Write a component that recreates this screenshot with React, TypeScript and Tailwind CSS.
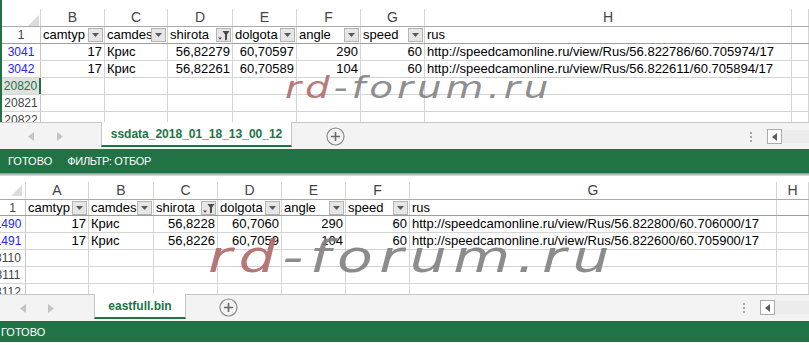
import React from "react";

type Col = { l: string; w: string };
type Row = { n: string; kind: "blue" | "sel" | "plain"; cells: string[] };

const HEADS = ["camtyp", "camdes", "shirota", "dolgota", "angle", "speed", "rus", ""];
const BTN: string[] = ["n", "n", "a", "n", "n", "n", "", ""];
const RIGHT = [true, false, true, true, true, true, false, false];

const TOP_COLS: Col[] = [
  { l: "B", w: "w-[64px]" },
  { l: "C", w: "w-[63px]" },
  { l: "D", w: "w-[65px]" },
  { l: "E", w: "w-[64px]" },
  { l: "F", w: "w-[64px]" },
  { l: "G", w: "w-[64px]" },
  { l: "H", w: "w-[367px]" },
  { l: "", w: "flex-1" },
];

const BOT_COLS: Col[] = [
  { l: "A", w: "w-[63px]" },
  { l: "B", w: "w-[65px]" },
  { l: "C", w: "w-[64px]" },
  { l: "D", w: "w-[64px]" },
  { l: "E", w: "w-[64px]" },
  { l: "F", w: "w-[64px]" },
  { l: "G", w: "w-[367px]" },
  { l: "H", w: "flex-1" },
];

const E = ["", "", "", "", "", "", "", ""];

const TOP_ROWS: Row[] = [
  { n: "3041", kind: "blue", cells: ["17", "Крис", "56,82279", "60,70597", "290", "60", "http://speedcamonline.ru/view/Rus/56.822786/60.705974/17", ""] },
  { n: "3042", kind: "blue", cells: ["17", "Крис", "56,82261", "60,70589", "104", "60", "http://speedcamonline.ru/view/Rus/56.822611/60.705894/17", ""] },
  { n: "20820", kind: "sel", cells: E },
  { n: "20821", kind: "plain", cells: E },
];

const BOT_ROWS: Row[] = [
  { n: "1490", kind: "blue", cells: ["17", "Крис", "56,8228", "60,7060", "290", "60", "http://speedcamonline.ru/view/Rus/56.822800/60.706000/17", ""] },
  { n: "1491", kind: "blue", cells: ["17", "Крис", "56,8226", "60,7059", "104", "60", "http://speedcamonline.ru/view/Rus/56.822600/60.705900/17", ""] },
  { n: "3110", kind: "plain", cells: E },
  { n: "3111", kind: "plain", cells: E },
];

function FilterBtn({ active }: { active: boolean }) {
  return (
    <div className="w-[15px] h-[14px] mr-[1px] mt-[1px] shrink-0 border border-[#b4b4b4] bg-[#e6e6e6] flex items-center justify-center">
      {active ? (
        <svg width="13" height="11" viewBox="0 0 13 11">
          <path d="M1 7.5 H5 L3 9.8 Z" fill="#4a4a4a" />
          <path d="M5.5 1 H12.5 L10 4.5 V9.5 L8 10.5 V4.5 Z" fill="#4a4a4a" />
        </svg>
      ) : (
        <svg width="7" height="4" viewBox="0 0 7 4">
          <path d="M0 0 H7 L3.5 4 Z" fill="#5a5a5a" />
        </svg>
      )}
    </div>
  );
}

function Corner() {
  return (
    <svg width="11" height="11" viewBox="0 0 11 11">
      <path d="M11 0 V11 H0 Z" fill="#dcdcdc" />
    </svg>
  );
}

function RowHead({ row, rhw, cut }: { row: Row; rhw: string; cut: boolean }) {
  const sel = row.kind === "sel";
  const color = row.kind === "blue" ? "text-[#2323ff]" : sel ? "text-[#217346]" : "text-[#444]";
  return (
    <div
      className={`${rhw} shrink-0 overflow-hidden flex text-[12px] ${color} ${
        sel ? "bg-[#e1e1e1] border-r-2 border-[#217346]" : "border-r border-[#c6c6c6]"
      }`}
    >
      {cut ? (
        <div className="w-[36px] -ml-[10px] shrink-0 text-center">{row.n}</div>
      ) : (
        <div className="w-full text-center">{row.n}</div>
      )}
    </div>
  );
}

function Grid({
  cols,
  rhw,
  cut,
  rows,
  letterH,
  row1H,
  cornerPad,
}: {
  cols: Col[];
  rhw: string;
  cut: boolean;
  rows: Row[];
  letterH: string;
  row1H: string;
  cornerPad: string;
}) {
  return (
    <div className="flex flex-col">
      <div className={`flex ${letterH} border-b border-[#ababab]`}>
        <div className={`${rhw} shrink-0 border-r border-[#d4d4d4] flex items-end justify-end ${cornerPad}`}>
          <Corner />
        </div>
        {cols.map((c, i) => (
          <div
            key={i}
            className={`${c.w} shrink-0 border-r border-[#d4d4d4] text-center text-[14px] leading-[17px] text-[#444]`}
          >
            {c.l}
          </div>
        ))}
      </div>
      <div className={`flex ${row1H} border-b border-[#9e9e9e]`}>
        <div className={`${rhw} shrink-0 border-r border-[#c6c6c6] text-center text-[12px] text-[#444]`}>1</div>
        {cols.map((c, i) => (
          <div key={i} className={`${c.w} shrink-0 border-r border-[#d4d4d4] flex overflow-hidden`}>
            <div className="flex-1 min-w-0 overflow-hidden whitespace-nowrap pl-[2px]">{HEADS[i]}</div>
            {BTN[i] ? <FilterBtn active={BTN[i] === "a"} /> : null}
          </div>
        ))}
      </div>
      {rows.map((r, ri) => (
        <div key={ri} className="flex h-[17px] border-b border-[#d4d4d4]">
          <RowHead row={r} rhw={rhw} cut={cut} />
          {cols.map((c, i) => (
            <div
              key={i}
              className={`${c.w} shrink-0 border-r border-[#d4d4d4] px-[2px] overflow-hidden whitespace-nowrap ${
                RIGHT[i] ? "text-right" : "text-left"
              }`}
            >
              {r.cells[i]}
            </div>
          ))}
        </div>
      ))}
      <div className="flex h-[10px] overflow-hidden">
        <div className={`${rhw} shrink-0 border-r border-[#c6c6c6] overflow-hidden flex text-[12px] text-[#444]`}>
          {cut ? (
            <div className="w-[36px] -ml-[10px] shrink-0 text-center">3112</div>
          ) : (
            <div className="w-full text-center">20822</div>
          )}
        </div>
        {cols.map((c, i) => (
          <div key={i} className={`${c.w} shrink-0 border-r border-[#d4d4d4]`} />
        ))}
      </div>
    </div>
  );
}

function Arrows({ pad, gap }: { pad: string; gap: string }) {
  return (
    <div className={`flex items-center ${pad} ${gap}`}>
      <svg width="6" height="9" viewBox="0 0 6 9">
        <path d="M6 0 V9 L0 4.5 Z" fill="#c4c4c4" />
      </svg>
      <svg width="6" height="9" viewBox="0 0 6 9">
        <path d="M0 0 V9 L6 4.5 Z" fill="#c4c4c4" />
      </svg>
    </div>
  );
}

function Plus() {
  return (
    <svg width="19" height="19" viewBox="0 0 19 19">
      <circle cx="9.5" cy="9.5" r="8.5" fill="none" stroke="#8a8a8a" strokeWidth="1.2" />
      <path d="M9.5 5 V14 M5 9.5 H14" stroke="#6a6a6a" strokeWidth="1.6" />
    </svg>
  );
}

function ScrollBits({ trackW, gap }: { trackW: string; gap: string }) {
  return (
    <div className={`flex items-center ${gap}`}>
      <div className="flex flex-col gap-[2px]">
        <div className="w-[2px] h-[2px] bg-[#a6a6a6]" />
        <div className="w-[2px] h-[2px] bg-[#a6a6a6]" />
        <div className="w-[2px] h-[2px] bg-[#a6a6a6]" />
      </div>
      <div className="flex items-center">
        <div className="w-[15px] h-[15px] border border-[#ababab] bg-white flex items-center justify-center">
          <svg width="5" height="8" viewBox="0 0 5 8">
            <path d="M5 0 V8 L0 4 Z" fill="#5c5c5c" />
          </svg>
        </div>
        <div className={`${trackW} h-[13px] bg-[#ececec]`} />
      </div>
    </div>
  );
}

function Watermark({ size, track }: { size: string; track: string }) {
  return (
    <div
      className={`origin-left scale-x-[1.3] font-[family-name:'DejaVu_Sans',sans-serif] font-extralight italic leading-none whitespace-nowrap ${size} ${track}`}
    >
      <span className="text-[#b06868]/90">rd</span>
      <span className="text-[#7f7f7f]/90">-forum.ru</span>
    </div>
  );
}

export default function App() {
  return (
    <div className="relative w-[809px] h-[345px] overflow-hidden bg-white font-[family-name:'Liberation_Sans',Arial,sans-serif] text-[13px] leading-[16px] text-black">
      {/* top window */}
      <div className="flex flex-col">
        <div className="border-l-2 border-[#217346]">
          <div className="h-[9px] bg-white" />
          <Grid
            cols={TOP_COLS}
            rhw="w-[39px]"
            cut={false}
            rows={TOP_ROWS}
            letterH="h-[18px]"
            row1H="h-[17px]"
            cornerPad="pr-[1px] pb-[0px]"
          />
        </div>
        <div className="flex h-[27px] bg-[#f3f3f3] border-t border-[#c6c6c6]">
          <div className="w-[101px] shrink-0">
            <Arrows pad="pl-[28px] pt-[9px]" gap="gap-[23px]" />
          </div>
          <div className="w-[191px] h-[25px] -mt-px shrink-0 bg-white border-x border-[#c6c6c6] border-b-2 border-b-[#217346] flex items-center justify-center text-[12px] font-bold text-[#217346]">
            ssdata_2018_01_18_13_00_12
          </div>
          <div className="ml-[34px] pt-[4px]">
            <Plus />
          </div>
          <div className="flex-1" />
          <div className="pt-[6px]">
            <ScrollBits trackW="w-[27px]" gap="gap-[15px]" />
          </div>
        </div>
        <div className="h-[24px] bg-[#217346] flex items-center pl-[8px] gap-[15px] text-[11px] text-white">
          <span>ГОТОВО</span>
          <span className="tracking-[-0.3px]">ФИЛЬТР: ОТБОР</span>
        </div>
        <div className="h-[3px] bg-gradient-to-b from-[#8f8f8f] to-[#e4e4e4]" />
        <div className="h-[6px] bg-white" />
      </div>

      {/* bottom window */}
      <div className="flex flex-col">
        <Grid
          cols={BOT_COLS}
          rhw="w-[26px]"
          cut={true}
          rows={BOT_ROWS}
          letterH="h-[18px]"
          row1H="h-[16px]"
          cornerPad="pr-[3px] pb-[3px]"
        />
        <div className="flex h-[27px] bg-[#f3f3f3] border-t border-[#c6c6c6]">
          <div className="w-[94px] shrink-0">
            <Arrows pad="pl-[20px] pt-[9px]" gap="gap-[22px]" />
          </div>
          <div className="w-[92px] h-[25px] -mt-px shrink-0 bg-white border-x border-[#c6c6c6] border-b-2 border-b-[#217346] flex items-center justify-center text-[12px] font-bold text-[#217346]">
            eastfull.bin
          </div>
          <div className="ml-[33px] pt-[3px]">
            <Plus />
          </div>
          <div className="flex-1" />
          <div className="pt-[5px]">
            <ScrollBits trackW="w-[34px]" gap="gap-[15px]" />
          </div>
        </div>
        <div className="h-[21px] bg-[#217346] flex items-center pl-[1px] text-[11px] text-white">
          <span>ГОТОВО</span>
        </div>
      </div>

      {/* watermarks */}
      <div className="absolute left-[285px] top-[73px] pointer-events-none">
        <Watermark size="text-[30px]" track="tracking-[3px]" />
      </div>
      <div className="absolute left-[208px] top-[234px] pointer-events-none">
        <Watermark size="text-[45px]" track="tracking-[5px]" />
      </div>
    </div>
  );
}
